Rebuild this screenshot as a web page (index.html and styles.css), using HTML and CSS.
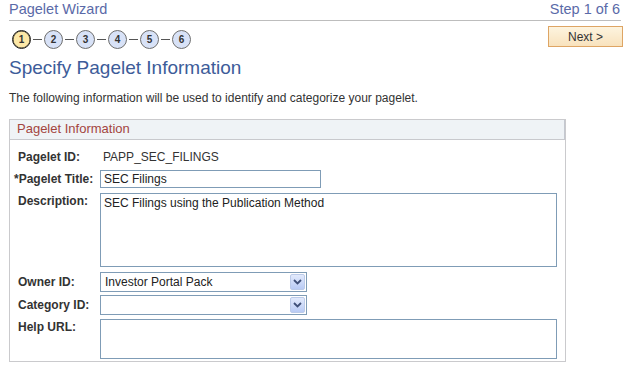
FILE: index.html
```html
<!DOCTYPE html>
<html lang="en">
<head>
<meta charset="utf-8">
<title>Pagelet Wizard</title>
<link rel="stylesheet" href="styles.css">
</head>
<body>
  <div class="wizard-head">
    <span class="wizard-title">Pagelet Wizard</span>
    <span class="wizard-step">Step 1 of 6</span>
  </div>

  <div class="steps-row">
    <div class="steps">
      <span class="step current">1</span><span class="link"></span>
      <span class="step">2</span><span class="link"></span>
      <span class="step">3</span><span class="link"></span>
      <span class="step">4</span><span class="link"></span>
      <span class="step">5</span><span class="link"></span>
      <span class="step">6</span>
    </div>
    <button class="next-btn" type="button">Next &gt;</button>
  </div>

  <h1 class="page-heading">Specify Pagelet Information</h1>
  <p class="intro">The following information will be used to identify and categorize your pagelet.</p>

  <div class="panel">
    <div class="panel-head">Pagelet Information</div>
    <div class="panel-body">
      <div class="row row-id">
        <span class="label">Pagelet ID:</span>
        <span class="value">PAPP_SEC_FILINGS</span>
      </div>
      <div class="row row-title">
        <span class="label"><span class="req">*</span>Pagelet Title:</span>
        <input class="field field-title" type="text" value="SEC Filings">
      </div>
      <div class="row row-desc">
        <span class="label">Description:</span>
        <textarea class="field area area-desc">SEC Filings using the Publication Method</textarea>
      </div>
      <div class="row row-owner">
        <span class="label">Owner ID:</span>
        <div class="select">
          <span class="select-text">Investor Portal Pack</span>
          <span class="select-btn"><svg width="9" height="6" viewBox="0 0 9 6"><path d="M1 1 L4.5 4.5 L8 1" fill="none" stroke="#3f5078" stroke-width="1.8"/></svg></span>
        </div>
      </div>
      <div class="row row-cat">
        <span class="label">Category ID:</span>
        <div class="select">
          <span class="select-text"></span>
          <span class="select-btn"><svg width="9" height="6" viewBox="0 0 9 6"><path d="M1 1 L4.5 4.5 L8 1" fill="none" stroke="#3f5078" stroke-width="1.8"/></svg></span>
        </div>
      </div>
      <div class="row row-help">
        <span class="label">Help URL:</span>
        <textarea class="field area area-help"></textarea>
      </div>
    </div>
  </div>
</body>
</html>
```

FILE: styles.css
```css
* { box-sizing: border-box; }

body {
  margin: 0;
  background: #ffffff;
  font-family: "Liberation Sans", Arial, sans-serif;
  color: #333333;
}

.wizard-head {
  display: flex;
  justify-content: space-between;
  align-items: flex-start;
  height: 21px;
  margin: 0 6px 0 9px;
  border-bottom: 1px solid #bdbdbd;
}

.wizard-title,
.wizard-step {
  font-size: 14.5px;
  line-height: 18px;
  color: #5a6aa8;
}

.wizard-step {
  margin-right: 1px;
}

.steps-row {
  display: flex;
  justify-content: space-between;
  align-items: flex-start;
  margin: 5px 4px 0 12px;
}

.steps {
  display: flex;
  align-items: center;
  margin-top: 4px;
}

.step {
  width: 19px;
  height: 19px;
  border-radius: 50%;
  border: 1px solid #6e6e6e;
  background: #d8e2f7;
  font-size: 10px;
  font-weight: bold;
  line-height: 17px;
  text-align: center;
  color: #333333;
}

.step.current {
  background: #fde8a6;
  border-color: #1e1e1e;
  box-shadow: inset 0 0 0 0.5px #1e1e1e;
}

.link {
  width: 9px;
  height: 1px;
  margin: 0 2px;
  background: #555555;
}

.next-btn {
  width: 75px;
  height: 21px;
  padding: 0;
  border: 1px solid #dea564;
  background: linear-gradient(#fdf4df, #f8e2bd);
  font-family: "Liberation Sans", Arial, sans-serif;
  font-size: 12px;
  color: #333333;
}

.page-heading {
  margin: 8px 0 0 9px;
  font-size: 19px;
  line-height: 22px;
  font-weight: normal;
  color: #3d5c99;
}

.intro {
  margin: 12px 0 0 9px;
  font-size: 12px;
  line-height: 14px;
  color: #333333;
}

.panel {
  margin: 14px 61px 0 9px;
  border: 1px solid #cacacd;
}

.panel-head {
  height: 20px;
  padding-left: 7px;
  font-size: 13px;
  line-height: 18px;
  color: #a3453f;
  background: #eff3f6;
  border-bottom: 1px solid #c8c9cd;
  border-right: 1px solid #c4c8d0;
}

.panel-body {
  display: flex;
  flex-direction: column;
  padding: 8px 8px 2px 8px;
}

.row {
  display: flex;
  align-items: center;
}

.row-id { height: 18px; }
.row-title { margin-top: 4px; }
.row-desc { margin-top: 5px; align-items: flex-start; }
.row-owner { margin-top: 5px; }
.row-cat { margin-top: 3px; }
.row-help { margin-top: 4px; align-items: flex-start; }

.row-desc .label,
.row-help .label {
  padding-top: 1px;
}

.label {
  width: 82px;
  flex: none;
  font-size: 12px;
  line-height: 14px;
  font-weight: bold;
  color: #333333;
}

.req {
  margin-left: -4px;
}

.value {
  margin-left: 3px;
  font-size: 12px;
  line-height: 14px;
  color: #333333;
}

.field {
  display: block;
  margin: 0;
  border: 1px solid #7f9cb6;
  font-family: "Liberation Sans", Arial, sans-serif;
  font-size: 12px;
  color: #222222;
  background: #ffffff;
  outline: none;
}

.field-title {
  width: 221px;
  height: 18px;
  padding: 0 3px;
}

.area {
  width: 458px;
  padding: 2px 3px;
  resize: none;
  overflow: hidden;
  line-height: 14px;
}

.area-desc { height: 74px; }
.area-help { height: 40px; }

.select {
  display: flex;
  align-items: center;
  justify-content: space-between;
  width: 207px;
  height: 20px;
  padding: 0 1px 0 4px;
  border: 1px solid #7f9cb6;
  background: #ffffff;
}

.select-text {
  font-size: 12px;
  line-height: 14px;
  color: #222222;
}

.select-btn {
  display: flex;
  align-items: center;
  justify-content: center;
  width: 15px;
  height: 16px;
  border: 1px solid #bccbe9;
  border-radius: 2px;
  background: linear-gradient(#e2eafc, #b9cbf5);
}
```
